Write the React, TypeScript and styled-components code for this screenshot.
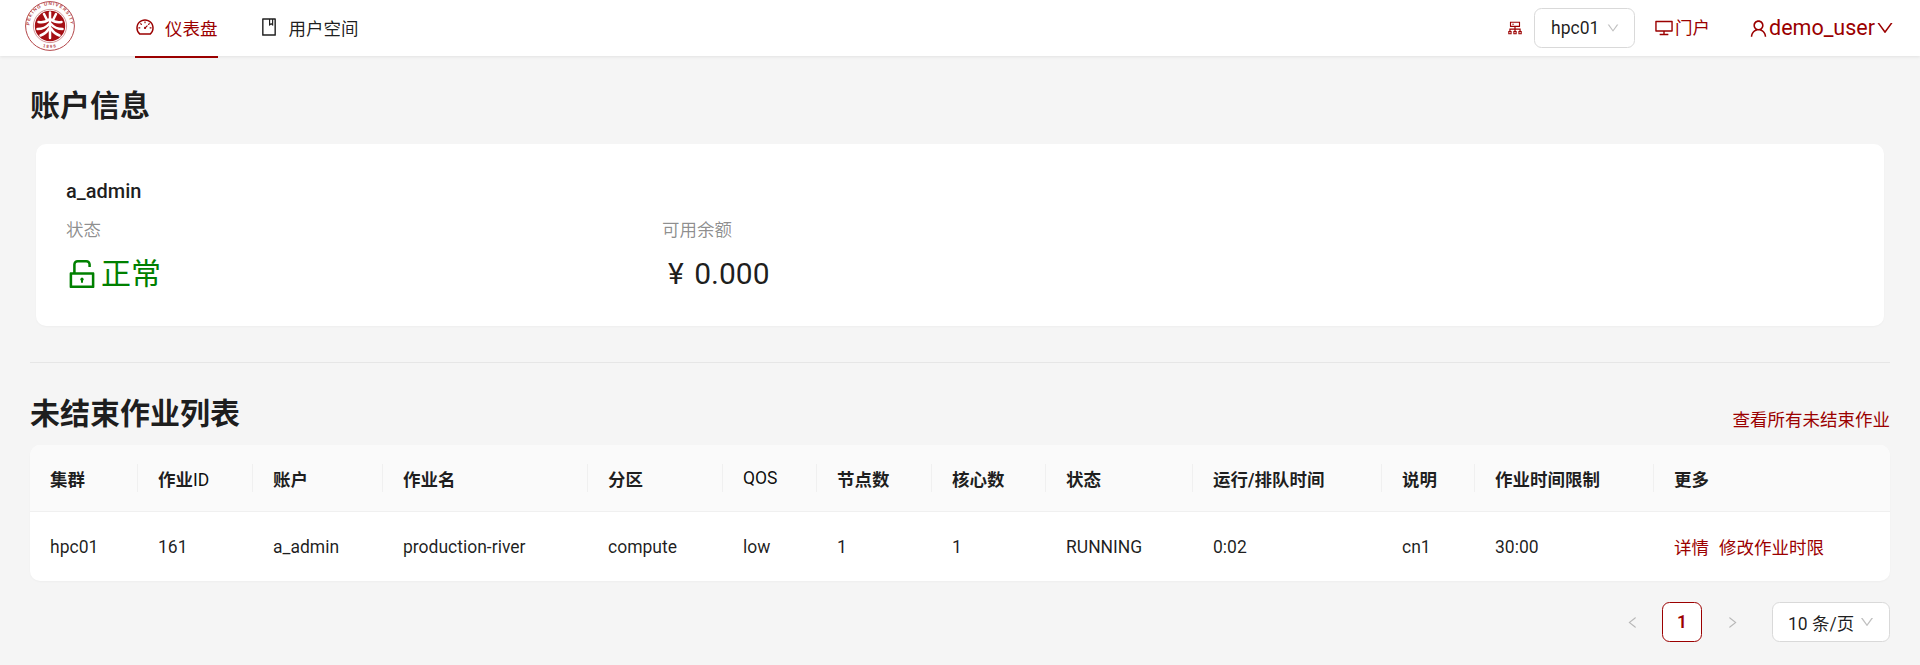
import React from "react";
import styled, { createGlobalStyle } from "styled-components";
import {
  AiOutlineDashboard,
  AiOutlineBook,
  AiOutlineCluster,
  AiOutlineDesktop,
  AiOutlineUser,
  AiOutlineDown,
  AiOutlineUnlock,
  AiOutlineLeft,
  AiOutlineRight,
} from "react-icons/ai";

const RED = "#9b0000";
const TEXT = "rgba(0,0,0,0.88)";

const Global = createGlobalStyle`
  html, body { margin: 0; padding: 0; background: #f5f5f5; }
  body {
    font-family: Roboto, "Noto Sans CJK SC", sans-serif;
    font-size: 17.5px;
    color: ${TEXT};
    height: 665px;
    overflow: hidden;
  }
  * { box-sizing: border-box; }
`;

const Header = styled.header`
  height: 56px;
  background: #fff;
  display: flex;
  align-items: center;
  box-shadow: 0 1px 3px rgba(0, 0, 0, 0.08);
  position: relative;
`;
const LogoBox = styled.div`
  width: 50px;
  height: 50px;
  margin: -4px 0 0 25px;
  flex: none;
`;
const Menu = styled.nav`
  display: flex;
  height: 56px;
  margin-left: 60px;
  gap: 41px;
`;
const MenuItem = styled.a<{ $active?: boolean }>`
  display: flex;
  align-items: center;
  height: 58px;
  gap: 10px;
  padding-bottom: 2px;
  color: ${(p) => (p.$active ? RED : TEXT)};
  border-bottom: 2px solid ${(p) => (p.$active ? RED : "transparent")};
  svg { font-size: 20px; }
`;
const Spacer = styled.div`
  flex: 1;
`;
const ClusterIcon = styled(AiOutlineCluster)`
  color: ${RED};
  font-size: 18px;
  margin-right: 10px;
`;
const Select = styled.div<{ $w: number; $chevron: number; $pl: number }>`
  width: ${(p) => p.$w}px;
  height: 40px;
  background: #fff;
  border: 1px solid #d9d9d9;
  border-radius: 7.5px;
  display: flex;
  align-items: center;
  justify-content: space-between;
  padding: 0 14px 0 ${(p) => p.$pl}px;
  font-size: 17.5px;
  color: ${TEXT};
  svg { color: rgba(0, 0, 0, 0.25); font-size: ${(p) => p.$chevron}px; }
`;
const PortalLink = styled.a`
  display: flex;
  align-items: center;
  color: ${RED};
  margin-left: 19px;
  line-height: 24px;
  gap: 1px;
  svg { font-size: 20px; }
`;
const UserLink = styled.a`
  display: flex;
  align-items: center;
  color: ${RED};
  font-size: 21.5px;
  margin: 0 25px 0 38px;
  line-height: 24px;
  svg { font-size: 20px; }
  svg:first-child { font-size: 21px; }
`;

const Main = styled.main`
  padding: 0 30px;
`;
const PageTitle = styled.h2`
  margin: 0;
  font-size: 30px;
  font-weight: 700;
  line-height: 40px;
  padding-top: 30px;
  height: 88px;
  color: ${TEXT};
`;
const AccountCard = styled.section`
  margin: 0 6px;
  height: 182px;
  background: #fff;
  border-radius: 10px;
  padding: 29px 30px 0;
  box-shadow: 0 1px 2px rgba(0, 0, 0, 0.03);
`;
const AccountName = styled.div`
  font-size: 20px;
  font-weight: 500;
  line-height: 36px;
  height: 36px;
`;
const StatGrid = styled.div`
  display: grid;
  grid-template-columns: repeat(3, 1fr);
  margin-top: 8px;
`;
const StatLabel = styled.div`
  color: rgba(0, 0, 0, 0.45);
  line-height: 26px;
`;
const StatValue = styled.div<{ $color?: string; $indent?: number }>`
  display: flex;
  align-items: center;
  font-size: 30px;
  line-height: 40px;
  margin-top: 11px;
  margin-left: ${(p) => p.$indent ?? 0}px;
  color: ${(p) => p.$color ?? TEXT};
  word-spacing: 3px;
  svg { font-size: 36px; margin: 0 1px 0 -2px; }
`;
const Divider = styled.hr`
  border: 0;
  border-top: 1px solid rgba(5, 5, 5, 0.06);
  margin: 36px 0 0;
`;
const SectionHead = styled.div`
  display: flex;
  justify-content: space-between;
  align-items: flex-end;
  height: 82px;
  padding-top: 31px;
`;
const SectionTitle = styled.h2`
  margin: 0;
  font-size: 30px;
  font-weight: 700;
  line-height: 40px;
  align-self: flex-start;
  color: ${TEXT};
`;
const AllLink = styled.a`
  color: ${RED};
  line-height: 24px;
  margin-bottom: 13px;
`;
const Table = styled.table`
  width: 100%;
  table-layout: fixed;
  border-collapse: separate;
  border-spacing: 0;
  background: #fff;
  border-radius: 10px;
  box-shadow: 0 1px 2px rgba(0, 0, 0, 0.03);
`;
const Th = styled.th`
  position: relative;
  height: 67px;
  padding: 0 20px;
  text-align: left;
  font-weight: 700;
  background: #fafafa;
  border-bottom: 1px solid #f0f0f0;
  white-space: nowrap;
  &:first-child { border-top-left-radius: 10px; }
  &:last-child { border-top-right-radius: 10px; }
  &:not(:last-child)::before {
    content: "";
    position: absolute;
    right: 0;
    top: 50%;
    width: 1px;
    height: 28px;
    transform: translateY(-50%);
    background: #f0f0f0;
  }
`;
const LatinHead = styled.span`
  font-weight: 400;
  color: rgba(0, 0, 0, 0.95);
`;
const Td = styled.td`
  height: 69px;
  padding: 0 20px;
  white-space: nowrap;
`;
const ActionLink = styled.a`
  color: ${RED};
  margin-right: 10px;
`;
const Pager = styled.div`
  display: flex;
  justify-content: flex-end;
  align-items: center;
  margin-top: 21px;
`;
const PageArrow = styled.span<{ $ml: number }>`
  display: flex;
  margin-left: ${(p) => p.$ml}px;
  color: rgba(0, 0, 0, 0.25);
  font-size: 15px;
`;
const PageNum = styled.span`
  width: 40px;
  height: 40px;
  margin-left: 22px;
  display: flex;
  align-items: center;
  justify-content: center;
  border: 1px solid ${RED};
  border-radius: 7.5px;
  background: #fff;
  color: ${RED};
  font-weight: 600;
`;
const SizeWrap = styled.div`
  margin-left: 32px;
`;

const columns = [108, 115, 130, 205, 135, 94, 115, 114, 147, 189, 93, 179, 236];
const heads: React.ReactNode[] = [
  "集群",
  <>作业<LatinHead>ID</LatinHead></>,
  "账户",
  "作业名",
  "分区",
  <LatinHead>QOS</LatinHead>,
  "节点数",
  "核心数",
  "状态",
  "运行/排队时间",
  "说明",
  "作业时间限制",
  "更多",
];
const row = ["hpc01", "161", "a_admin", "production-river", "compute", "low", "1", "1", "RUNNING", "0:02", "cn1", "30:00"];

const Logo = () => (
  <svg width="50" height="50" viewBox="0 0 50 50" aria-label="logo">
    <defs>
      <path id="ringTop" d="M5.2 30 A20.5 20.5 0 1 1 44.8 30" />
      <path id="ringBottom" d="M13 43.5 A22 22 0 0 0 37 43.5" />
    </defs>
    <circle cx="25" cy="25" r="24.4" fill="#fff" stroke="#b4474a" strokeWidth="1" />
    <circle cx="25" cy="25" r="16.6" fill="#fff" stroke="#c06a6c" strokeWidth=".7" />
    <text fontFamily="Liberation Sans, sans-serif" fontSize="4.6" fontWeight="700" fill="#b4474a" letterSpacing="1">
      <textPath href="#ringTop" startOffset="50%" textAnchor="middle">PEKING UNIVERSITY</textPath>
    </text>
    <text fontFamily="Liberation Sans, sans-serif" fontSize="4.4" fontWeight="700" fill="#b4474a" letterSpacing="1.2">
      <textPath href="#ringBottom" startOffset="50%" textAnchor="middle">1898</textPath>
    </text>
    <circle cx="25" cy="25" r="15.2" fill="#a50f14" />
    <g fill="none" stroke="#fff" strokeWidth="2.5" strokeLinecap="round">
      <path d="M19 13 L22 19" />
      <path d="M31 13 L28 19" />
      <path d="M25 11.5 V37" />
      <path d="M13.5 21 Q20 22 24 18.5" />
      <path d="M36.5 21 Q30 22 26 18.5" />
      <path d="M12.5 28 Q20 28 24 23" />
      <path d="M37.5 28 Q30 28 26 23" />
      <path d="M15.5 34.5 Q21 32.5 24 27.5" />
      <path d="M34.5 34.5 Q29 32.5 26 27.5" />
    </g>
  </svg>
);

export default function App() {
  return (
    <>
      <Global />
      <Header>
        <LogoBox><Logo /></LogoBox>
        <Menu>
          <MenuItem $active><AiOutlineDashboard />仪表盘</MenuItem>
          <MenuItem><AiOutlineBook />用户空间</MenuItem>
        </Menu>
        <Spacer />
        <ClusterIcon />
        <Select $w={101} $chevron={14} $pl={16}>hpc01<AiOutlineDown /></Select>
        <PortalLink><AiOutlineDesktop />门户</PortalLink>
        <UserLink><AiOutlineUser />demo_user<AiOutlineDown /></UserLink>
      </Header>
      <Main>
        <PageTitle>账户信息</PageTitle>
        <AccountCard>
          <AccountName>a_admin</AccountName>
          <StatGrid>
            <div>
              <StatLabel>状态</StatLabel>
              <StatValue $color="#008000"><AiOutlineUnlock />正常</StatValue>
            </div>
            <div>
              <StatLabel>可用余额</StatLabel>
              <StatValue $indent={6}>¥ 0.000</StatValue>
            </div>
          </StatGrid>
        </AccountCard>
        <Divider />
        <SectionHead>
          <SectionTitle>未结束作业列表</SectionTitle>
          <AllLink>查看所有未结束作业</AllLink>
        </SectionHead>
        <Table>
          <colgroup>
            {columns.map((w, i) => <col key={i} style={{ width: w }} />)}
          </colgroup>
          <thead>
            <tr>{heads.map((h, i) => <Th key={i}>{h}</Th>)}</tr>
          </thead>
          <tbody>
            <tr>
              {row.map((c, i) => <Td key={i}>{c}</Td>)}
              <Td><ActionLink>详情</ActionLink><ActionLink>修改作业时限</ActionLink></Td>
            </tr>
          </tbody>
        </Table>
        <Pager>
          <PageArrow $ml={0}><AiOutlineLeft /></PageArrow>
          <PageNum>1</PageNum>
          <PageArrow $ml={23}><AiOutlineRight /></PageArrow>
          <SizeWrap><Select $w={118} $chevron={16} $pl={15}>10 条/页<AiOutlineDown /></Select></SizeWrap>
        </Pager>
      </Main>
    </>
  );
}
